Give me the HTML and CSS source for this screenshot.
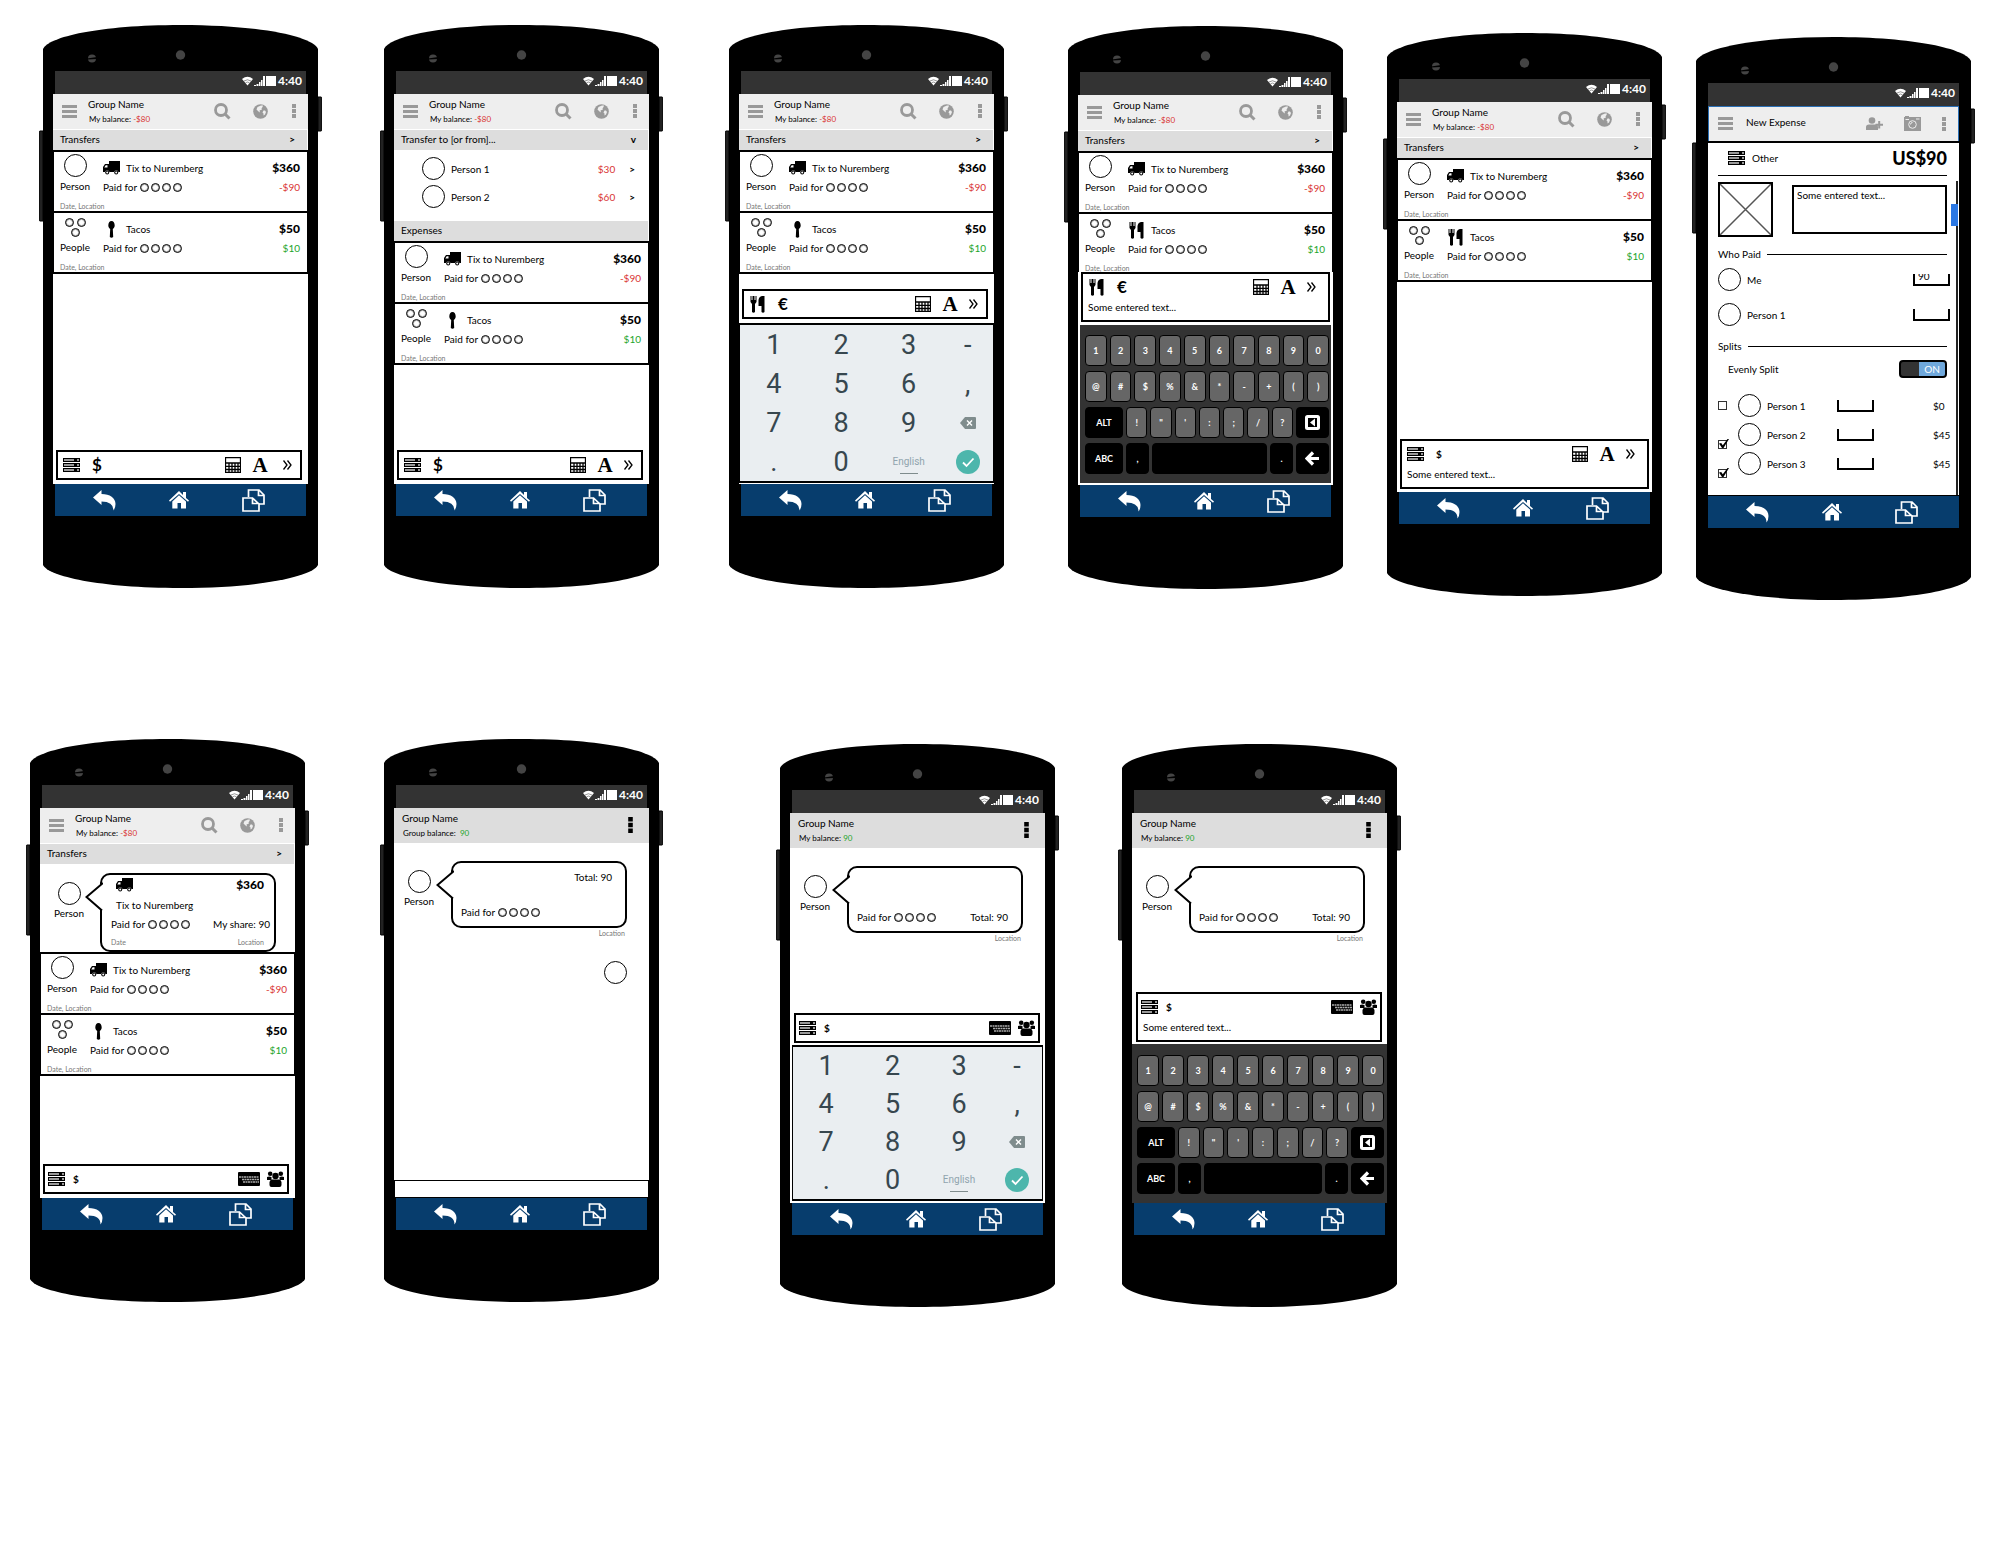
FILE: index.html
```html
<!DOCTYPE html>
<html lang="en">
<head>
<meta charset="utf-8">
<title>Group expenses wireframes</title>
<link rel="stylesheet" href="styles.css">
</head>
<body>
<svg class="sprite" aria-hidden="true">
  <symbol id="frame" viewBox="0 0 283 563">
    <path d="M4 106H1Q0 106 0 108V194Q0 196 1 196H4ZM279 72H282Q283 72 283 74V104Q283 106 282 106H279Z" fill="#222" stroke="#000"/>
    <path d="M4 24C9 12 60 0 141.500 0S274 12 279 24V540C274 551 223 563 141.500 563S9 551 4 540Z" fill="#000"/>
    <circle cx="141.500" cy="30" r="4.700" fill="#444"/>
    <circle cx="53" cy="33.500" r="4" fill="#444"/>
    <path d="M48 33.500L58 32V34L48 34.500Z" fill="#000"/>
  </symbol>
  <symbol id="signal" viewBox="0 0 34 11">
    <path d="M0 3Q5.500 -1.500 11 3L5.500 9.500Z" fill="#fff"/>
    <path d="M2 5Q5.500 2.500 9 5M3.500 6.800Q5.500 5.300 7.500 6.800" fill="none" stroke="#333" stroke-width=".5"/>
    <path d="M12 10V9H14V10ZM14.500 10V8H16.500V10ZM17 10V6H18.500V10ZM19 10V4H20.500V10ZM21 10V0H23V10ZM24 0H34V10H24Z" fill="#fff"/>
  </symbol>
  <symbol id="menu" viewBox="0 0 15 13"><path d="M0 0H15V3H0ZM0 5H15V8H0ZM0 10H15V13H0Z"/></symbol>
  <symbol id="search" viewBox="0 0 17 17"><path d="M11 11L15.500 15.500" fill="none" stroke="currentColor" stroke-width="3"/><circle cx="7" cy="7" r="5.500" fill="none" stroke="currentColor" stroke-width="2.800"/></symbol>
  <symbol id="globe" viewBox="0 0 15 15"><circle cx="7.500" cy="7.500" r="7.300"/><path d="M8 1.500L10 1.500 9.500 3 8.500 4.500 9 5.500 6.500 6.500 7 8.500 5.500 7.500 3.500 5.500 4.500 3ZM10.500 6.500L12 6.500 13 8 12 10.500 10.500 11.500 10.500 9.500 9.500 8.500Z" fill="#eee"/></symbol>
  <symbol id="dots" viewBox="0 0 4 14"><path d="M0 0H4V4H0ZM0 5H4V9H0ZM0 10H4V14H0Z"/></symbol>
  <symbol id="truck" viewBox="0 0 17 14"><path d="M6 0H17V11H15.500A2.500 2.500 0 0 0 11 11H6.500A2.500 2.500 0 0 0 2 11H0V6L2 3H6ZM2.700 4.200L1.300 6.500H4.500V4.200Z" fill-rule="evenodd"/><circle cx="4.200" cy="11.500" r="2"/><circle cx="13.200" cy="11.500" r="2"/><circle cx="4.200" cy="11.500" r="1" fill="#fff"/><circle cx="13.200" cy="11.500" r="1" fill="#fff"/></symbol>
  <symbol id="spoon" viewBox="0 0 7 17"><path d="M3.500 0C5.500 0 6.700 2 6.700 4.500 6.700 6.500 5.500 7.500 4.800 8L5.200 16Q3.500 17.500 1.800 16L2.200 8C1.500 7.500 .3 6.500 .3 4.500 .3 2 1.500 0 3.500 0Z"/></symbol>
  <symbol id="cutlery" viewBox="0 0 14 17"><path d="M0 0H1V4H2V0H4V4H5V0H6V6L4.500 8V16Q3 17.500 1.500 16V8L0 6ZM14 0V16Q12.500 17.500 11 16V10H8V4Q8.500 .5 11.500 0Z"/></symbol>
  <symbol id="server" viewBox="0 0 17 14"><path d="M0 0H17V4H0ZM0 5H17V9H0ZM0 10H17V14H0Z"/><path d="M1 1.200H11V2.800H1ZM1 6.200H11V7.800H1ZM1 11.200H11V12.800H1Z" fill="#ccc"/><path d="M14 1.200H16V2.800H14ZM14 6.200H16V7.800H14ZM14 11.200H16V12.800H14Z" fill="#ccc"/></symbol>
  <symbol id="calc" viewBox="0 0 16 16"><path d="M.5 .5H15.500V15.500H.5ZM1 6H15M1 9.300H15M1 12.500H15M4 6V15M7 6V15M10 6V15M13 6V15" fill="none" stroke="currentColor" stroke-width="1.300"/></symbol>
  <symbol id="more" viewBox="0 0 9 10"><path d="M.5 .5L4 5 .5 9.500M4.500 .5L8 5 4.500 9.500" fill="none" stroke="currentColor" stroke-width="1.300"/></symbol>
  <symbol id="card" viewBox="0 0 22 14"><path d="M1 0H21Q22 0 22 1V13Q22 14 21 14H1Q0 14 0 13V1Q0 0 1 0Z"/><path d="M1 5H21M4 7.500H21M5 10H21" fill="none" stroke="#aaa" stroke-width="1.400" stroke-dasharray="2 .5"/></symbol>
  <symbol id="people" viewBox="0 0 17 16"><circle cx="3.200" cy="2.700" r="2.300"/><circle cx="13.800" cy="2.700" r="2.300"/><circle cx="8.500" cy="5" r="3.200"/><path d="M0 6Q2 5 4.500 6L4.500 9H0ZM17 6Q15 5 12.500 6V9H17ZM2.500 14V11Q3 8.500 5 8.500H12Q14 8.500 14.500 11V14Q14.500 16 12.500 16H4.500Q2.500 16 2.500 14Z"/></symbol>
  <symbol id="adduser" viewBox="0 0 17 13"><circle cx="6" cy="3.500" r="3.300"/><path d="M0 13V10Q0 7.500 3 7.500H9Q12 7.500 12 10V13ZM12.200 4H14.200V6.800H17V8.800H14.200V11.600H12.200V8.800H9.500V6.800H12.200Z"/></symbol>
  <symbol id="camera" viewBox="0 0 17 15"><path d="M1 0H5V1H17V15H0V1H1Z"/><path d="M1.500 3.500H5M12 3H15.500" stroke="#eee"/><circle cx="8.500" cy="8.500" r="3.800" fill="none" stroke="#eee"/><path d="M6.500 8.500A2 2 0 0 1 8.500 6.500" fill="none" stroke="#eee"/></symbol>
  <symbol id="back" viewBox="0 0 23 21"><path d="M0 7.500L8.500 0V4C17 4 22.500 8 22.500 14Q22.500 18 20.500 20.500 20.500 11.500 8.500 11.500V15Z" fill="#fff"/></symbol>
  <symbol id="home" viewBox="0 0 20 18"><path d="M10 0L14 4V1H17V7L20 9.500 19 10.800 10 3 1 10.800 0 9.500ZM10 4.300L17 10.500V17.500H12V12H8.500V17.500H3.300V10.500Z" fill="#fff"/></symbol>
  <symbol id="tabs" viewBox="0 0 23 23"><path d="M6.500 8V1H17L22 6V15H17M16.500 1V6.500H22" fill="none" stroke="#fff" stroke-width="1.700"/><path d="M1 9H10.500L17 15V22H1ZM10.500 9V14.500H17" fill="none" stroke="#fff" stroke-width="1.700"/></symbol>
  <symbol id="erase" viewBox="0 0 16 12"><path d="M5 0H15Q16 0 16 1V11Q16 12 15 12H5L0 6Z" fill="#7f8c8d"/><path d="M7 3.500L12 8.500M12 3.500L7 8.500" stroke="#fff" stroke-width="1.400"/></symbol>
  <symbol id="ok" viewBox="0 0 24 24"><circle cx="12" cy="12" r="12" fill="#4db6ac"/><path d="M7 12.500L10.500 16 17.500 8.500" fill="none" stroke="#fff" stroke-width="1.800"/></symbol>
  <symbol id="enter" viewBox="0 0 15 15"><rect x="1.500" y="1.500" width="12" height="12" rx="1" fill="none" stroke="#fff" stroke-width="3"/><path d="M10 3.500V11.500L5 7.500Z" fill="#fff"/></symbol>
  <symbol id="left" viewBox="0 0 15 15"><path d="M8 1.500L2 7.500 8 13.500M2 7.500H14" fill="none" stroke="#fff" stroke-width="3.200"/></symbol>
  <symbol id="tail" viewBox="0 0 18 30"><path d="M18 1L1.500 15 18 29Z" fill="#fff"/><path d="M18 1L1.500 15 17 28.500" fill="none" stroke="#000" stroke-width="2"/></symbol>
  <symbol id="photo" viewBox="0 0 55 55"><path d="M1 1L54 54M54 1L1 54" stroke="#555" stroke-width="1.500"/><rect x="1" y="1" width="53" height="53" fill="none" stroke="#000" stroke-width="2"/></symbol>
</svg>

<main class="board">

<article class="phone p1">
  <svg class="frame"><use href="#frame"/></svg>
  <div class="status"><svg width="34" height="11"><use href="#signal"/></svg><time>4:40</time></div>
  <div class="screen">
    <header class="bar"><button aria-label="Menu"><svg width="15" height="13"><use href="#menu"/></svg></button><div class="title"><h2>Group Name</h2><p>My balance: <span class="neg">-$80</span></p></div><button aria-label="Search"><svg width="17" height="17"><use href="#search"/></svg></button><button aria-label="Web"><svg width="15" height="15"><use href="#globe"/></svg></button><button aria-label="More"><svg width="4" height="14"><use href="#dots"/></svg></button></header>
    <button class="section"><span>Transfers</span><span class="go">&gt;</span></button>
    <div class="list">
      <section class="item"><div class="who"><i class="face"></i><span>Person</span></div><div class="what"><svg width="17" height="14"><use href="#truck"/></svg><span>Tix to Nuremberg</span></div><b>$360</b><div class="paid">Paid for <span class="dots"><i></i><i></i><i></i><i></i></span></div><span class="share neg">-$90</span><small>Date, Location</small></section>
      <section class="item"><div class="who"><span class="trio"><i></i><i></i><i></i></span><span>People</span></div><div class="what"><svg width="17" height="17"><use href="#spoon"/></svg><span>Tacos</span></div><b>$50</b><div class="paid">Paid for <span class="dots"><i></i><i></i><i></i><i></i></span></div><span class="share pos">$10</span><small>Date, Location</small></section>
    </div>
    <div class="composer"><div class="tools"><button aria-label="Category"><svg width="17" height="14"><use href="#server"/></svg></button><button class="cur">$</button><button aria-label="Calculator"><svg width="16" height="16"><use href="#calc"/></svg></button><button class="letter spaced">A</button><button aria-label="Next"><svg width="9" height="10"><use href="#more"/></svg></button></div></div>
  </div>
  <nav class="keys3"><button aria-label="Back"><svg width="23" height="21"><use href="#back"/></svg></button><button aria-label="Home"><svg width="20" height="18"><use href="#home"/></svg></button><button aria-label="Recent"><svg width="23" height="23"><use href="#tabs"/></svg></button></nav>
</article>

<article class="phone p2">
  <svg class="frame"><use href="#frame"/></svg>
  <div class="status"><svg width="34" height="11"><use href="#signal"/></svg><time>4:40</time></div>
  <div class="screen">
    <header class="bar"><button aria-label="Menu"><svg width="15" height="13"><use href="#menu"/></svg></button><div class="title"><h2>Group Name</h2><p>My balance: <span class="neg">-$80</span></p></div><button aria-label="Search"><svg width="17" height="17"><use href="#search"/></svg></button><button aria-label="Web"><svg width="15" height="15"><use href="#globe"/></svg></button><button aria-label="More"><svg width="4" height="14"><use href="#dots"/></svg></button></header>
    <button class="section"><span>Transfer to [or from]...</span><span class="go">v</span></button>
    <div class="transfers">
      <button class="transfer"><i class="face"></i><span>Person 1</span><span class="neg">$30</span><span class="go">&gt;</span></button>
      <button class="transfer"><i class="face"></i><span>Person 2</span><span class="neg">$60</span><span class="go">&gt;</span></button>
    </div>
    <div class="section"><span>Expenses</span></div>
    <div class="list">
      <section class="item"><div class="who"><i class="face"></i><span>Person</span></div><div class="what"><svg width="17" height="14"><use href="#truck"/></svg><span>Tix to Nuremberg</span></div><b>$360</b><div class="paid">Paid for <span class="dots"><i></i><i></i><i></i><i></i></span></div><span class="share neg">-$90</span><small>Date, Location</small></section>
      <section class="item"><div class="who"><span class="trio"><i></i><i></i><i></i></span><span>People</span></div><div class="what"><svg width="17" height="17"><use href="#spoon"/></svg><span>Tacos</span></div><b>$50</b><div class="paid">Paid for <span class="dots"><i></i><i></i><i></i><i></i></span></div><span class="share pos">$10</span><small>Date, Location</small></section>
    </div>
    <div class="composer"><div class="tools"><button aria-label="Category"><svg width="17" height="14"><use href="#server"/></svg></button><button class="cur">$</button><button aria-label="Calculator"><svg width="16" height="16"><use href="#calc"/></svg></button><button class="letter">A</button><button aria-label="Next"><svg width="9" height="10"><use href="#more"/></svg></button></div></div>
  </div>
  <nav class="keys3"><button aria-label="Back"><svg width="23" height="21"><use href="#back"/></svg></button><button aria-label="Home"><svg width="20" height="18"><use href="#home"/></svg></button><button aria-label="Recent"><svg width="23" height="23"><use href="#tabs"/></svg></button></nav>
</article>

<article class="phone p3">
  <svg class="frame"><use href="#frame"/></svg>
  <div class="status"><svg width="34" height="11"><use href="#signal"/></svg><time>4:40</time></div>
  <div class="screen">
    <header class="bar"><button aria-label="Menu"><svg width="15" height="13"><use href="#menu"/></svg></button><div class="title"><h2>Group Name</h2><p>My balance: <span class="neg">-$80</span></p></div><button aria-label="Search"><svg width="17" height="17"><use href="#search"/></svg></button><button aria-label="Web"><svg width="15" height="15"><use href="#globe"/></svg></button><button aria-label="More"><svg width="4" height="14"><use href="#dots"/></svg></button></header>
    <button class="section"><span>Transfers</span><span class="go">&gt;</span></button>
    <div class="list">
      <section class="item"><div class="who"><i class="face"></i><span>Person</span></div><div class="what"><svg width="17" height="14"><use href="#truck"/></svg><span>Tix to Nuremberg</span></div><b>$360</b><div class="paid">Paid for <span class="dots"><i></i><i></i><i></i><i></i></span></div><span class="share neg">-$90</span><small>Date, Location</small></section>
      <section class="item"><div class="who"><span class="trio"><i></i><i></i><i></i></span><span>People</span></div><div class="what"><svg width="17" height="17"><use href="#spoon"/></svg><span>Tacos</span></div><b>$50</b><div class="paid">Paid for <span class="dots"><i></i><i></i><i></i><i></i></span></div><span class="share pos">$10</span><small>Date, Location</small></section>
    </div>
    <div class="composer"><div class="tools"><button aria-label="Category"><svg width="17" height="17"><use href="#cutlery"/></svg></button><button class="cur">€</button><button aria-label="Calculator"><svg width="16" height="16"><use href="#calc"/></svg></button><button class="letter">A</button><button aria-label="Next"><svg width="9" height="10"><use href="#more"/></svg></button></div></div>
    <div class="keypad"><button>1</button><button>2</button><button>3</button><button>-</button><button>4</button><button>5</button><button>6</button><button>,</button><button>7</button><button>8</button><button>9</button><button aria-label="Delete"><svg width="16" height="12"><use href="#erase"/></svg></button><button>.</button><button>0</button><button class="lang">English</button><button aria-label="Done"><svg width="24" height="24"><use href="#ok"/></svg></button></div>
  </div>
  <nav class="keys3"><button aria-label="Back"><svg width="23" height="21"><use href="#back"/></svg></button><button aria-label="Home"><svg width="20" height="18"><use href="#home"/></svg></button><button aria-label="Recent"><svg width="23" height="23"><use href="#tabs"/></svg></button></nav>
</article>

<article class="phone p4">
  <svg class="frame"><use href="#frame"/></svg>
  <div class="status"><svg width="34" height="11"><use href="#signal"/></svg><time>4:40</time></div>
  <div class="screen">
    <header class="bar"><button aria-label="Menu"><svg width="15" height="13"><use href="#menu"/></svg></button><div class="title"><h2>Group Name</h2><p>My balance: <span class="neg">-$80</span></p></div><button aria-label="Search"><svg width="17" height="17"><use href="#search"/></svg></button><button aria-label="Web"><svg width="15" height="15"><use href="#globe"/></svg></button><button aria-label="More"><svg width="4" height="14"><use href="#dots"/></svg></button></header>
    <button class="section"><span>Transfers</span><span class="go">&gt;</span></button>
    <div class="list">
      <section class="item"><div class="who"><i class="face"></i><span>Person</span></div><div class="what"><svg width="17" height="14"><use href="#truck"/></svg><span>Tix to Nuremberg</span></div><b>$360</b><div class="paid">Paid for <span class="dots"><i></i><i></i><i></i><i></i></span></div><span class="share neg">-$90</span><small>Date, Location</small></section>
      <section class="item"><div class="who"><span class="trio"><i></i><i></i><i></i></span><span>People</span></div><div class="what"><svg width="17" height="17"><use href="#cutlery"/></svg><span>Tacos</span></div><b>$50</b><div class="paid">Paid for <span class="dots"><i></i><i></i><i></i><i></i></span></div><span class="share pos">$10</span><small>Date, Location</small></section>
    </div>
    <div class="composer tall"><div class="tools"><button aria-label="Category"><svg width="17" height="17"><use href="#cutlery"/></svg></button><button class="cur">€</button><button aria-label="Calculator"><svg width="16" height="16"><use href="#calc"/></svg></button><button class="letter">A</button><button aria-label="Next"><svg width="9" height="10"><use href="#more"/></svg></button></div><input aria-label="Description" value="Some entered text..."></div>
    <div class="keyboard framed">
      <div><button>1</button><button>2</button><button>3</button><button>4</button><button>5</button><button>6</button><button>7</button><button>8</button><button>9</button><button>0</button></div>
      <div><button>@</button><button>#</button><button>$</button><button>%</button><button>&amp;</button><button>*</button><button>-</button><button>+</button><button>(</button><button>)</button></div>
      <div><button class="wide">ALT</button><button>!</button><button>"</button><button>'</button><button>:</button><button>;</button><button>/</button><button>?</button><button class="mid" aria-label="Enter"><svg width="15" height="15"><use href="#enter"/></svg></button></div>
      <div><button class="wide">ABC</button><button class="dark">,</button><button class="space" aria-label="Space"></button><button class="dark">.</button><button class="mid" aria-label="Backspace"><svg width="15" height="15"><use href="#left"/></svg></button></div>
    </div>
  </div>
  <nav class="keys3"><button aria-label="Back"><svg width="23" height="21"><use href="#back"/></svg></button><button aria-label="Home"><svg width="20" height="18"><use href="#home"/></svg></button><button aria-label="Recent"><svg width="23" height="23"><use href="#tabs"/></svg></button></nav>
</article>

<article class="phone p5">
  <svg class="frame"><use href="#frame"/></svg>
  <div class="status"><svg width="34" height="11"><use href="#signal"/></svg><time>4:40</time></div>
  <div class="screen">
    <header class="bar"><button aria-label="Menu"><svg width="15" height="13"><use href="#menu"/></svg></button><div class="title"><h2>Group Name</h2><p>My balance: <span class="neg">-$80</span></p></div><button aria-label="Search"><svg width="17" height="17"><use href="#search"/></svg></button><button aria-label="Web"><svg width="15" height="15"><use href="#globe"/></svg></button><button aria-label="More"><svg width="4" height="14"><use href="#dots"/></svg></button></header>
    <button class="section"><span>Transfers</span><span class="go">&gt;</span></button>
    <div class="list">
      <section class="item"><div class="who"><i class="face"></i><span>Person</span></div><div class="what"><svg width="17" height="14"><use href="#truck"/></svg><span>Tix to Nuremberg</span></div><b>$360</b><div class="paid">Paid for <span class="dots"><i></i><i></i><i></i><i></i></span></div><span class="share neg">-$90</span><small>Date, Location</small></section>
      <section class="item"><div class="who"><span class="trio"><i></i><i></i><i></i></span><span>People</span></div><div class="what"><svg width="17" height="17"><use href="#cutlery"/></svg><span>Tacos</span></div><b>$50</b><div class="paid">Paid for <span class="dots"><i></i><i></i><i></i><i></i></span></div><span class="share pos">$10</span><small>Date, Location</small></section>
    </div>
    <div class="composer tall"><div class="tools"><button aria-label="Category"><svg width="17" height="14"><use href="#server"/></svg></button><button class="cur sm">$</button><button aria-label="Calculator"><svg width="16" height="16"><use href="#calc"/></svg></button><button class="letter">A</button><button aria-label="Next"><svg width="9" height="10"><use href="#more"/></svg></button></div><input aria-label="Description" value="Some entered text..."></div>
  </div>
  <nav class="keys3"><button aria-label="Back"><svg width="23" height="21"><use href="#back"/></svg></button><button aria-label="Home"><svg width="20" height="18"><use href="#home"/></svg></button><button aria-label="Recent"><svg width="23" height="23"><use href="#tabs"/></svg></button></nav>
</article>

<article class="phone p6">
  <svg class="frame"><use href="#frame"/></svg>
  <div class="status"><svg width="34" height="11"><use href="#signal"/></svg><time>4:40</time></div>
  <div class="screen edged">
    <header class="bar picked"><button aria-label="Menu"><svg width="15" height="13"><use href="#menu"/></svg></button><div class="title"><h2>New Expense</h2></div><button aria-label="Add person"><svg width="17" height="13"><use href="#adduser"/></svg></button><button aria-label="Photo"><svg width="17" height="15"><use href="#camera"/></svg></button><button aria-label="More"><svg width="4" height="14"><use href="#dots"/></svg></button></header>
    <form class="expense">
      <div class="total"><svg width="17" height="14"><use href="#server"/></svg><span>Other</span><b>US$90</b></div>
      <div class="note"><svg width="55" height="55"><use href="#photo"/></svg><textarea aria-label="Note">Some entered text...</textarea></div>
      <h3>Who Paid</h3>
      <div class="payers">
        <label class="payer"><i class="face"></i><span>Me</span><span class="slot"><input value="90"></span></label>
        <label class="payer"><i class="face"></i><span>Person 1</span><span class="slot"><input></span></label>
      </div>
      <h3>Splits</h3>
      <label class="even"><span>Evenly Split</span><span class="switch"><input type="checkbox" checked><span>ON</span></span></label>
      <div class="split"><input type="checkbox" aria-label="Include Person 1"><i class="face"></i><span>Person 1</span><span class="slot"><input aria-label="Person 1 amount"></span><span>$0</span></div>
      <div class="split"><input type="checkbox" checked aria-label="Include Person 2"><i class="face"></i><span>Person 2</span><span class="slot"><input aria-label="Person 2 amount"></span><span>$45</span></div>
      <div class="split"><input type="checkbox" checked aria-label="Include Person 3"><i class="face"></i><span>Person 3</span><span class="slot"><input aria-label="Person 3 amount"></span><span>$45</span></div>
      <div class="scroll"></div>
    </form>
  </div>
  <nav class="keys3"><button aria-label="Back"><svg width="23" height="21"><use href="#back"/></svg></button><button aria-label="Home"><svg width="20" height="18"><use href="#home"/></svg></button><button aria-label="Recent"><svg width="23" height="23"><use href="#tabs"/></svg></button></nav>
</article>

<article class="phone p7">
  <svg class="frame"><use href="#frame"/></svg>
  <div class="status"><svg width="34" height="11"><use href="#signal"/></svg><time>4:40</time></div>
  <div class="screen">
    <header class="bar"><button aria-label="Menu"><svg width="15" height="13"><use href="#menu"/></svg></button><div class="title"><h2>Group Name</h2><p>My balance: <span class="neg">-$80</span></p></div><button aria-label="Search"><svg width="17" height="17"><use href="#search"/></svg></button><button aria-label="Web"><svg width="15" height="15"><use href="#globe"/></svg></button><button aria-label="More"><svg width="4" height="14"><use href="#dots"/></svg></button></header>
    <button class="section"><span>Transfers</span><span class="go">&gt;</span></button>
    <div class="message first">
      <div class="who"><i class="face"></i><span>Person</span></div>
      <div class="bubble full"><svg class="tail" width="18" height="30"><use href="#tail"/></svg>
        <div class="line"><svg width="17" height="14"><use href="#truck"/></svg><b>$360</b></div>
        <div class="line"><span>Tix to Nuremberg</span></div>
        <div class="line paidline"><div class="paid">Paid for <span class="dots"><i></i><i></i><i></i><i></i></span></div><span>My share: 90</span></div>
        <div class="line meta"><small>Date</small><small>Location</small></div>
      </div>
    </div>
    <div class="list">
      <section class="item"><div class="who"><i class="face"></i><span>Person</span></div><div class="what"><svg width="17" height="14"><use href="#truck"/></svg><span>Tix to Nuremberg</span></div><b>$360</b><div class="paid">Paid for <span class="dots"><i></i><i></i><i></i><i></i></span></div><span class="share neg">-$90</span><small>Date, Location</small></section>
      <section class="item"><div class="who"><span class="trio"><i></i><i></i><i></i></span><span>People</span></div><div class="what"><svg width="17" height="17"><use href="#spoon"/></svg><span>Tacos</span></div><b>$50</b><div class="paid">Paid for <span class="dots"><i></i><i></i><i></i><i></i></span></div><span class="share pos">$10</span><small>Date, Location</small></section>
    </div>
    <div class="composer pay"><div class="tools"><button aria-label="Category"><svg width="17" height="14"><use href="#server"/></svg></button><button class="cur sm">$</button><button aria-label="Payment"><svg width="22" height="14"><use href="#card"/></svg></button><button aria-label="People"><svg width="17" height="16"><use href="#people"/></svg></button></div></div>
  </div>
  <nav class="keys3"><button aria-label="Back"><svg width="23" height="21"><use href="#back"/></svg></button><button aria-label="Home"><svg width="20" height="18"><use href="#home"/></svg></button><button aria-label="Recent"><svg width="23" height="23"><use href="#tabs"/></svg></button></nav>
</article>

<article class="phone p8">
  <svg class="frame"><use href="#frame"/></svg>
  <div class="status"><svg width="34" height="11"><use href="#signal"/></svg><time>4:40</time></div>
  <div class="screen">
    <header class="bar plain"><div class="title"><h2>Group Name</h2><p>Group balance: &nbsp;<span class="pos">90</span></p></div><button aria-label="More"><svg width="5" height="16"><use href="#dots"/></svg></button></header>
    <div class="message">
      <div class="who"><i class="face"></i><span>Person</span></div>
      <div class="bubble"><svg class="tail" width="18" height="30"><use href="#tail"/></svg><span class="sum">Total: 90</span><div class="paid">Paid for <span class="dots"><i></i><i></i><i></i><i></i></span></div></div>
    </div>
    <small class="place">Location</small>
    <i class="face me"></i>
    <input class="empty" aria-label="Message">
  </div>
  <nav class="keys3"><button aria-label="Back"><svg width="23" height="21"><use href="#back"/></svg></button><button aria-label="Home"><svg width="20" height="18"><use href="#home"/></svg></button><button aria-label="Recent"><svg width="23" height="23"><use href="#tabs"/></svg></button></nav>
</article>

<article class="phone p9">
  <svg class="frame"><use href="#frame"/></svg>
  <div class="status"><svg width="34" height="11"><use href="#signal"/></svg><time>4:40</time></div>
  <div class="screen">
    <header class="bar plain"><div class="title"><h2>Group Name</h2><p>My balance: <span class="pos">90</span></p></div><button aria-label="More"><svg width="5" height="16"><use href="#dots"/></svg></button></header>
    <div class="message">
      <div class="who"><i class="face"></i><span>Person</span></div>
      <div class="bubble"><svg class="tail" width="18" height="30"><use href="#tail"/></svg><div class="line end"><div class="paid">Paid for <span class="dots"><i></i><i></i><i></i><i></i></span></div><span>Total: 90</span></div></div>
    </div>
    <small class="place">Location</small>
    <div class="composer pay docked"><div class="tools"><button aria-label="Category"><svg width="17" height="14"><use href="#server"/></svg></button><button class="cur sm">$</button><button aria-label="Payment"><svg width="22" height="14"><use href="#card"/></svg></button><button aria-label="People"><svg width="17" height="16"><use href="#people"/></svg></button></div></div>
    <div class="keypad small"><button>1</button><button>2</button><button>3</button><button>-</button><button>4</button><button>5</button><button>6</button><button>,</button><button>7</button><button>8</button><button>9</button><button aria-label="Delete"><svg width="16" height="12"><use href="#erase"/></svg></button><button>.</button><button>0</button><button class="lang">English</button><button aria-label="Done"><svg width="24" height="24"><use href="#ok"/></svg></button></div>
  </div>
  <nav class="keys3"><button aria-label="Back"><svg width="23" height="21"><use href="#back"/></svg></button><button aria-label="Home"><svg width="20" height="18"><use href="#home"/></svg></button><button aria-label="Recent"><svg width="23" height="23"><use href="#tabs"/></svg></button></nav>
</article>

<article class="phone p10">
  <svg class="frame"><use href="#frame"/></svg>
  <div class="status"><svg width="34" height="11"><use href="#signal"/></svg><time>4:40</time></div>
  <div class="screen">
    <header class="bar plain"><div class="title"><h2>Group Name</h2><p>My balance: <span class="pos">90</span></p></div><button aria-label="More"><svg width="5" height="16"><use href="#dots"/></svg></button></header>
    <div class="message">
      <div class="who"><i class="face"></i><span>Person</span></div>
      <div class="bubble"><svg class="tail" width="18" height="30"><use href="#tail"/></svg><div class="line end"><div class="paid">Paid for <span class="dots"><i></i><i></i><i></i><i></i></span></div><span>Total: 90</span></div></div>
    </div>
    <small class="place">Location</small>
    <div class="composer tall pay docked"><div class="tools"><button aria-label="Category"><svg width="17" height="14"><use href="#server"/></svg></button><button class="cur sm">$</button><button aria-label="Payment"><svg width="22" height="14"><use href="#card"/></svg></button><button aria-label="People"><svg width="17" height="16"><use href="#people"/></svg></button></div><input aria-label="Description" value="Some entered text..."></div>
    <div class="keyboard">
      <div><button>1</button><button>2</button><button>3</button><button>4</button><button>5</button><button>6</button><button>7</button><button>8</button><button>9</button><button>0</button></div>
      <div><button>@</button><button>#</button><button>$</button><button>%</button><button>&amp;</button><button>*</button><button>-</button><button>+</button><button>(</button><button>)</button></div>
      <div><button class="wide">ALT</button><button>!</button><button>"</button><button>'</button><button>:</button><button>;</button><button>/</button><button>?</button><button class="mid" aria-label="Enter"><svg width="15" height="15"><use href="#enter"/></svg></button></div>
      <div><button class="wide">ABC</button><button class="dark">,</button><button class="space" aria-label="Space"></button><button class="dark">.</button><button class="mid" aria-label="Backspace"><svg width="15" height="15"><use href="#left"/></svg></button></div>
    </div>
  </div>
  <nav class="keys3"><button aria-label="Back"><svg width="23" height="21"><use href="#back"/></svg></button><button aria-label="Home"><svg width="20" height="18"><use href="#home"/></svg></button><button aria-label="Recent"><svg width="23" height="23"><use href="#tabs"/></svg></button></nav>
</article>

</main>
</body>
</html>
```
FILE: styles.css
```css
* { box-sizing: border-box; }
body { margin: 0; background: #fff; color: #000; font: 10px/12px Lato, "Noto Sans", sans-serif; }
h2, h3, p { margin: 0; font-size: 10px; font-weight: 400; }
button { margin: 0; padding: 0; border: 0; background: none; color: inherit; font: inherit; display: flex; align-items: center; justify-content: center; }
input, textarea { margin: 0; padding: 0; border: 0; background: none; color: inherit; font: inherit; min-width: 0; border-radius: 0; }
svg { display: block; fill: currentColor; flex: none; }
i { display: block; flex: none; }
small { font-size: 7px; line-height: 10px; color: #777; }
b { font-weight: 900; font-size: 12px; }
.sprite { position: absolute; width: 0; height: 0; }
.neg { color: #d93434; }
.pos { color: #1ea52c; }
.go { font-weight: 700; }

/* Free canvas with the device mock-ups */
.board { position: relative; min-height: 1545px; }
.phone { position: absolute; width: 275px; padding: 46px 10px 72px; }
.p1 { left: 43px; top: 25px; }
.p2 { left: 384px; top: 25px; }
.p3 { left: 729px; top: 25px; }
.p4 { left: 1068px; top: 26px; }
.p5 { left: 1387px; top: 33px; }
.p6 { left: 1696px; top: 37px; }
.p7 { left: 30px; top: 739px; }
.p8 { left: 384px; top: 739px; }
.p9 { left: 780px; top: 744px; }
.p10 { left: 1122px; top: 744px; }
.frame { position: absolute; left: -4px; top: 0; width: 283px; height: 563px; z-index: -1; }

.status { height: 23px; margin: 0 2px; padding: 0 4px 3px 0; background: #333; color: #fff; display: flex; align-items: center; justify-content: flex-end; gap: 2px; }
.status time { font-size: 12px; font-weight: 700; }
.screen { height: 390px; background: #fff; display: flex; flex-direction: column; }
.keys3 { height: 32px; margin: 0 2px; padding: 0 41px 0 38px; background: #073d6d; display: flex; align-items: center; justify-content: space-between; }

/* App bar */
.bar { flex: none; height: 35px; padding: 0 12px 1px 9px; background: #eee; color: #999; display: flex; align-items: center; }
.bar button + button { margin-left: 22px; }
.bar button:last-child { margin-left: 24px; }
.title { flex: 1; margin-left: 11px; color: #000; }
.title p { font-size: 8px; margin: 4px 0 0 1px; line-height: 10px; }
.title h2 { line-height: 12px; }
.plain { padding: 0 16px 1px 8px; background: #ddd; }
.plain .title { margin-left: 0; }
.plain button { color: #000; }
.section { flex: none; height: 20px; margin: 1px 1px 0 0; padding: 0 12px 2px 7px; background: #ddd; display: flex; align-items: center; justify-content: space-between; }

.face { width: 23px; height: 23px; border: 1px solid #000; border-radius: 50%; }
.who { display: flex; flex-direction: column; align-items: center; gap: 3px; }

/* Expense rows */
.list { flex: 1 1 0; min-height: 0; overflow: hidden; }
.item { height: 63px; border: 2px solid #000; border-width: 2px 1px; padding: 2px 7px 0 4px; display: grid; grid-template-columns: 34px 1fr auto; grid-template-rows: 28px 10px 1fr; column-gap: 11px; align-items: center; }
.item + .item { margin-top: -2px; }
.item .who { grid-row: 1 / 3; align-self: start; }
.what { display: flex; align-items: center; gap: 6px; }
.item b, .share { text-align: right; }
.paid { display: flex; align-items: center; gap: 3px; white-space: nowrap; }
.dots { display: flex; gap: 2px; }
.dots i, .trio i { width: 9px; height: 9px; border: 1px solid #000; border-radius: 50%; box-shadow: inset 0 0 0 1px #0005; }
.item small { grid-column: 1 / 4; align-self: end; margin-left: 2px; }
.trio { width: 21px; height: 23px; padding-top: 3px; display: flex; flex-wrap: wrap; justify-content: center; column-gap: 3px; }

.transfers { flex: none; height: 70px; padding: 7px 14px 0 28px; display: flex; flex-direction: column; gap: 5px; }
.transfer { gap: 6px; height: 23px; }
.transfer span:nth-child(2) { flex: 1; text-align: left; }
.transfer span:nth-child(3) { margin-right: 8px; }

/* Entry box over the list */
.composer { flex: none; height: 30px; margin: 0 6px 4px 3px; padding: 0 8px 0 5px; border: 2px solid #000; background: #fff; }
.tools { display: flex; align-items: center; height: 26px; }
.cur { width: 10px; margin: 0 auto 0 12px; font-size: 17px; font-weight: 700; }
.sm { font-size: 10px; width: 6px; }
.letter { width: 16px; margin: 0 11px; font: bold 21px/22px "Liberation Serif", serif; }
.spaced { margin-right: 15px; }
.tall { height: 50px; margin: 0 3px 3px; padding-right: 12px; }
.tall input { display: block; width: 100%; height: 14px; }
.pay { padding: 0 3px; }
.pay .cur { margin-left: 8px; }
.pay .tools button:last-child { margin-left: 7px; }
.docked { margin: auto 5px 2px 4px; }
.docked.tall input { padding-left: 2px; }

.keypad { flex: none; height: 160px; border: 1px solid #000; border-width: 2px 1px; margin: 0 0 1px; background: #eaeef1; color: #37474f; display: grid; grid-template-columns: 4fr 4fr 4fr 3fr; grid-template-rows: repeat(4, 1fr); font: 27px/30px Roboto, sans-serif; }
.small { height: 156px; margin: 0 2px 2px; }
.lang { position: relative; font-size: 10px; color: #90a4ae; }
.lang::after { content: ""; position: absolute; left: 50%; bottom: 7px; width: 18px; height: 1px; margin-left: -9px; background: #7f8c8d; }

.keyboard { flex: none; height: 159px; padding: 11px 3px 0 5px; background: #333; display: flex; flex-direction: column; gap: 5px; }
.framed { height: 160px; border: 2px solid #fff; border-top: 0; padding: 10px 2px 0 5px; }
.keyboard div { display: flex; gap: 3px; }
.keyboard button { flex: 1; height: 31px; border: 1px solid #000; border-radius: 4px; background: #666; color: #fff; font-size: 9px; font-weight: 700; }
.keyboard .wide { flex: 0 0 38px; background: #000; }
.keyboard .mid { flex: 0 0 33px; background: #000; }
.keyboard .dark { flex: 0 0 23px; background: #000; }
.keyboard .space { background: #000; }

/* Speech bubbles */
.message { flex: none; display: flex; align-items: flex-start; padding: 18px 22px 0 10px; gap: 17px; }
.message .who { width: 30px; padding-top: 9px; gap: 2px; }
.bubble { position: relative; flex: 1; height: 67px; padding: 0 13px 8px 8px; border: 2px solid #000; border-radius: 10px; display: flex; flex-direction: column; justify-content: flex-end; }
.tail { position: absolute; left: -17px; top: 7px; }
.line { display: flex; align-items: center; justify-content: space-between; }
.sum { align-self: flex-end; margin: 0 0 auto; padding-top: 8px; }
.place { flex: none; text-align: right; margin-right: 24px; }
.me { flex: none; margin: 23px 0 0 210px; }
.empty { flex: none; height: 18px; margin-top: auto; border: 1px solid #000; }
.first { padding: 9px 19px 0 14px; gap: 16px; }
.full { height: 79px; padding: 0 4px 0 9px; justify-content: flex-start; }
.full .line { padding: 0 6px 0 5px; height: 20px; }
.full .line:nth-of-type(2) { height: 19px; }
.full .paidline { padding: 0; }
.full .meta { height: 16px; padding-left: 0; }

/* New expense form */
.edged { border: 2px solid #000; border-width: 0 2px 1px; }
.picked { border: 1px solid #2a6fb5; border-bottom: 0; }
.picked .title { margin-left: 13px; padding-bottom: 4px; }
.picked button + button, .picked button:last-child { margin-left: 21px; }
.expense { position: relative; flex: 1; border-top: 2px solid #000; padding: 0 12px 0 10px; }
.total { height: 33px; padding: 0 0 2px 10px; border-bottom: 1px solid #000; display: flex; align-items: center; gap: 7px; }
.total b { margin-left: auto; font-size: 18px; }
.note { display: flex; gap: 19px; align-items: center; padding: 6px 0; }
.note textarea { flex: 1; height: 49px; border: 2px solid #000; padding: 2px 3px; resize: none; }
h3 { display: flex; align-items: center; gap: 6px; height: 22px; }
h3::after { content: ""; flex: 1; height: 1px; background: #000; }
.payers { height: 70px; margin: -3px 0 3px; }
.payer { height: 35px; display: flex; align-items: center; gap: 6px; }
.slot { width: 37px; height: 12px; overflow: hidden; display: flex; align-items: flex-end; }
.slot input { flex: none; width: 37px; height: 17px; border: 2px solid #000; border-top: 0; padding-left: 3px; }
.payer .slot { margin: 0 -3px 0 auto; }
.even { height: 24px; margin-bottom: 10px; padding-left: 10px; display: flex; align-items: center; justify-content: space-between; }
.switch { display: flex; width: 48px; height: 18px; border: 2px solid #000; border-radius: 4px; background: #333; color: #fff; }
.switch input { width: 18px; appearance: none; }
.switch span { flex: 1; background: #6fa8dc; text-align: center; line-height: 14px; border-radius: 0 2px 2px 0; }
.split { height: 29px; display: grid; grid-template-columns: 9px 23px 87px 96px auto; align-items: center; }
.split .face { margin-left: 11px; }
.split > span:nth-child(3) { margin-left: 17px; }
.split > input { appearance: none; width: 9px; height: 9px; border: 1px solid #333; }
.split > input:checked { position: relative; align-self: end; }
.split > input:checked::after { content: ""; position: absolute; left: 0; top: -2px; width: 10px; height: 9px; background: #000; clip-path: polygon(0 50%, 22% 45%, 38% 70%, 85% 0, 100% 0, 45% 100%, 30% 100%); }
.scroll { position: absolute; right: 1px; top: 38px; bottom: 0; width: 2px; background: #222; }
.scroll::after { content: ""; position: absolute; right: 0; top: 23px; width: 7px; height: 22px; background: #2b78e4; }
```
